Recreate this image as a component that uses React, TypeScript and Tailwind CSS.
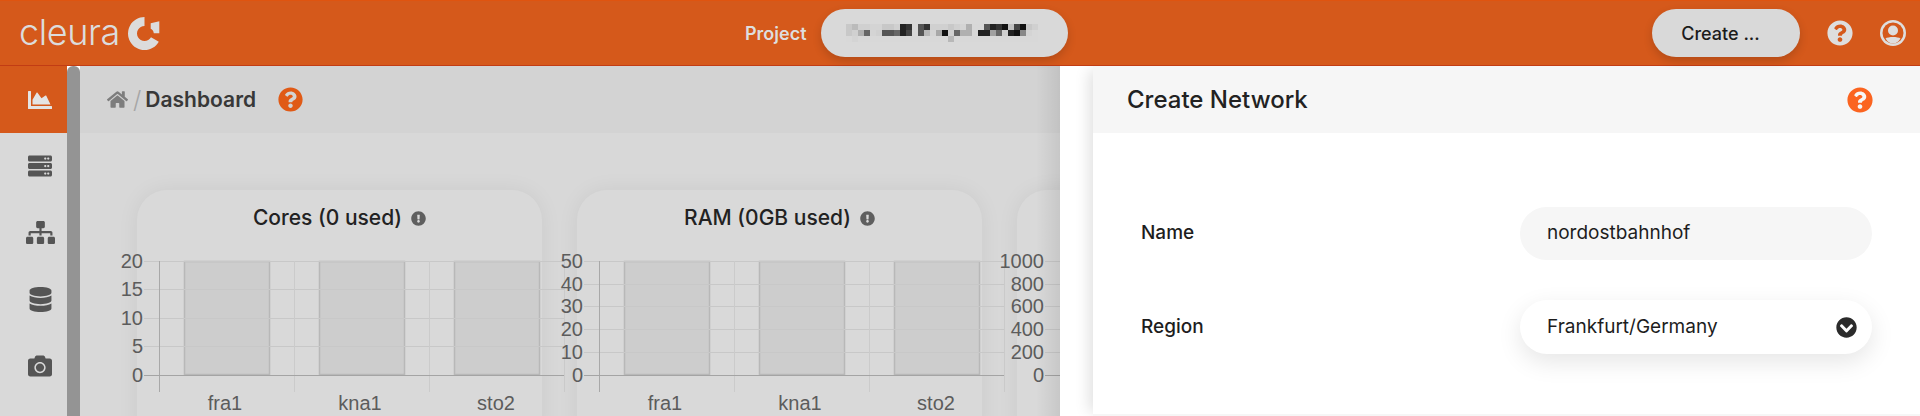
import { FaCamera, FaChartArea, FaChevronCircleDown, FaDatabase, FaExclamationCircle, FaHome, FaQuestionCircle, FaServer, FaSitemap } from "react-icons/fa";

type ChartProps = {
  axisX?: number;
  right: number;
  tickEnd: number;
  ticks: { label: string; y: number }[];
  bars?: number[];
  barWidth?: number;
  grid?: number[];
  labels?: { label: string; x: number }[];
};

// coordinates are relative to the card's left edge, numbers and ticks hang out to the left
const Chart = ({ axisX, right, tickEnd, ticks, bars = [], barWidth = 0, grid = [], labels = [] }: ChartProps) => (
  <svg width={405} height={205} className="block overflow-visible font-['Liberation_Sans',sans-serif]">
    {bars.map((x) => (
      <rect key={x} x={x + 0.5} y={16.5} width={barWidth} height={113} fill="#cdcdcd" stroke="#b8b8b8" strokeWidth={1.5} />
    ))}
    {ticks.map((t) => (
      <line key={t.label} x1={right + 1} x2={tickEnd} y1={t.y + 0.5} y2={t.y + 0.5} stroke="#c8c8c8" />
    ))}
    {grid.map((x) => (
      <line key={x} x1={x + 0.5} x2={x + 0.5} y1={16} y2={147} stroke="#cbcbcb" />
    ))}
    {axisX !== undefined && <line x1={axisX + 0.5} x2={axisX + 0.5} y1={16} y2={147} stroke="#a8a8a8" />}
    <line x1={right + 1} x2={tickEnd} y1={130.5} y2={130.5} stroke="#a4a4a4" />
    {ticks.map((t) => (
      <text key={t.label} x={right} y={t.y + 7} textAnchor="end" fontSize={20} fill="#5c5c5c">
        {t.label}
      </text>
    ))}
    {labels.map((l) => (
      <text key={l.label} x={l.x} y={165} textAnchor="middle" fontSize={20} fill="#5c5c5c">
        {l.label}
      </text>
    ))}
  </svg>
);

const ChartCard = ({ title, chart }: { title?: string; chart: ChartProps }) => (
  <div className="shrink-0 w-[405px] h-[260px] rounded-[30px] bg-[#d9d9d9] shadow-[0_0_22px_rgba(0,0,0,0.06)]">
    <div className="h-[55px] flex items-center justify-center gap-[9px] text-[21px] font-medium text-[#222222]">
      {title}
      {title && <FaExclamationCircle size={15} className="text-[#5f5f5f] mt-[2px]" />}
    </div>
    <Chart {...chart} />
  </div>
);

const MOSAIC = [
  "c8 bb d0 d0 d4 d4 c8 c8 d0 22 33 d8 55 33 d0 d0 d0 c8 d0 d4 b0 d8 d8 55 22 33 11 c0 44 11 c8 d0",
  "c8 d0 b0 66 d4 d0 55 55 66 22 44 d8 55 b8 d4 a8 11 d0 66 b0 b0 d8 22 22 a0 66 d0 22 11 88 d4 d8",
  "d8 d4 d8 d8 d8 d8 d8 d8 d8 d8 d8 d8 d8 d8 d8 d8 d8 b8 d8 d8 d8 d8 d8 d8 d8 d8 d8 d8 d8 d8 d8 d8",
].map((row) => row.split(" "));

const Pill = "rounded-full bg-[#d9d9d9] shadow-[0_4px_10px_rgba(0,0,0,0.16)] flex items-center";

const TICKS_SIX = (labels: string[]) => [16, 39, 61, 84, 107, 130].map((y, i) => ({ label: labels[i], y }));

const App = () => {
  const xLabels = [
    { label: "fra1", x: 88 },
    { label: "kna1", x: 223 },
    { label: "sto2", x: 359 },
  ];
  const coresChart: ChartProps = {
    axisX: 22,
    right: 6,
    tickEnd: 427,
    ticks: [
      { label: "20", y: 16 },
      { label: "15", y: 44 },
      { label: "10", y: 73 },
      { label: "5", y: 101 },
      { label: "0", y: 130 },
    ],
    bars: [47, 182, 317],
    barWidth: 85,
    grid: [157, 292, 427],
    labels: xLabels,
  };
  const ramChart: ChartProps = {
    axisX: 22,
    right: 6,
    tickEnd: 427,
    ticks: TICKS_SIX(["50", "40", "30", "20", "10", "0"]),
    bars: [47, 182, 317],
    barWidth: 85,
    grid: [157, 292, 427],
    labels: xLabels,
  };
  const thirdChart: ChartProps = {
    right: 27,
    tickEnd: 60,
    ticks: TICKS_SIX(["1000", "800", "600", "400", "200", "0"]),
  };

  return (
    <div className="w-[1920px] h-[416px] overflow-hidden flex flex-col bg-white font-['Inter',sans-serif]">
      <header className="relative z-20 h-[66px] shrink-0 flex items-center bg-[#d5591b] border-t border-t-[#df5410] border-b border-b-[#c23c14]">
        <div className="flex items-center w-[200px] pl-[19px]">
          <span className="w-[97px] text-[36px] font-light leading-none text-[#dcdcdc] tracking-[-0.4px] pb-[2px]">cleura</span>
          <svg width="32" height="33" viewBox="0 0 32 33" className="ml-[12px]">
            <path d="M16.5 0 A16.5 16.5 0 1 0 30.8 24.75 L23 20.25 A7.5 7.5 0 1 1 16.5 9 Z" fill="#dcdcdc" />
            <path d="M22.7 6.2 L31.3 4.2 L31.3 16.2 L25.8 16.2 C25.6 14 24.5 12.6 22.7 11.8 Z" fill="#dcdcdc" />
          </svg>
        </div>
        <div className="ml-[545px] text-[18px] font-semibold text-[#dedede]">Project</div>
        <div className={`ml-[14px] w-[247px] h-[48px] pl-[25px] ${Pill}`}>
          <svg width="192" height="18" viewBox="0 0 192 18">
            {MOSAIC.map((row, y) =>
              row.map((c, x) => <rect key={`${x}-${y}`} x={x * 6} y={y * 6} width={6} height={6} fill={`#${c}${c}${c}`} />),
            )}
          </svg>
        </div>
        <div className={`ml-[584px] w-[148px] h-[48px] pr-[10px] justify-center text-[18px] font-medium text-[#1b1b1b] ${Pill}`}>
          Create ...
        </div>
        <FaQuestionCircle size={26} className="ml-[27px] text-[#dedede]" />
        <svg width="26" height="26" viewBox="0 0 26 26" className="ml-[27px]">
          <circle cx="13" cy="13" r="13" fill="#dedede" />
          <circle cx="13" cy="13" r="10.5" fill="#d5591b" />
          <circle cx="13" cy="10.5" r="5" fill="#dedede" />
          <path d="M5.5 18.5 C8 16.5 18 16.5 20.5 18.5 C19 21.5 16 23.5 13 23.5 C10 23.5 7 21.5 5.5 18.5 Z" fill="#dedede" />
        </svg>
      </header>

      <div className="flex flex-1 min-h-0">
        <nav className="w-[67px] shrink-0 bg-[#d9d9d9] flex flex-col text-[#555555]">
          <div className="h-[67px] pl-[13px] bg-[#d5591b] flex items-center justify-center text-[#e4e4e4]">
            <FaChartArea size={24} />
          </div>
          <div className="h-[66px] pl-[13px] flex items-center justify-center"><FaServer size={24} /></div>
          <div className="h-[67px] pl-[13px] flex items-center justify-center"><FaSitemap size={29} /></div>
          <div className="h-[66px] pl-[13px] flex items-center justify-center"><FaDatabase size={25} /></div>
          <div className="h-[67px] pl-[13px] flex items-center justify-center"><FaCamera size={24} /></div>
        </nav>
        <div className="w-[13px] shrink-0 bg-[#949494] rounded-t-[6px]" />

        <main className="flex-1 min-w-0 relative overflow-hidden bg-[#d8d8d8]">
          <div className="h-[67px] bg-[#d3d3d3] flex items-center pl-[27px] text-[21px]">
            <FaHome size={21} className="text-[#7d7d7d]" />
            <span className="ml-[5px] mr-[4px] text-[24px] text-[#a6a6a6] font-light">/</span>
            <span className="font-semibold text-[#383838]">Dashboard</span>
            <FaQuestionCircle size={25} className="ml-[22px] text-[#e05a16]" />
          </div>
          <div className="flex gap-[35px] pl-[57px] pt-[57px]">
            <ChartCard title="Cores (0 used)" chart={coresChart} />
            <ChartCard title="RAM (0GB used)" chart={ramChart} />
            <ChartCard chart={thirdChart} />
          </div>
          <div className="absolute right-0 inset-y-0 w-[24px] bg-gradient-to-r from-transparent to-black/[0.08]" />
        </main>

        <aside className="w-[860px] shrink-0 flex bg-white">
          <div className="w-[33px] shrink-0" />
          <div className="flex-1 flex flex-col shadow-[-8px_0_14px_-4px_rgba(0,0,0,0.12)]">
            <div className="h-[67px] shrink-0 bg-[#f6f6f6] flex items-center justify-between pl-[34px] pr-[47px]">
              <span className="text-[24px] font-medium text-[#222222]">Create Network</span>
              <FaQuestionCircle size={26} className="text-[#fb6420]" />
            </div>
            <div className="flex-1 flex flex-col pt-[74px] text-[19px] text-[#1d1d1d]">
              <div className="flex items-center h-[53px] pl-[48px]">
                <span className="w-[379px] font-medium">Name</span>
                <div className="w-[352px] h-[53px] rounded-full bg-[#f6f6f6] flex items-center pl-[27px]">nordostbahnhof</div>
              </div>
              <div className="flex items-center h-[54px] pl-[48px] mt-[40px]">
                <span className="w-[379px] font-medium">Region</span>
                <div className="w-[352px] h-[54px] rounded-full bg-white shadow-[0_8px_24px_rgba(0,0,0,0.1)] flex items-center justify-between pl-[27px] pr-[15px]">
                  Frankfurt/Germany
                  <FaChevronCircleDown size={21} className="text-[#2b2b2b]" />
                </div>
              </div>
            </div>
            <div className="h-[2px] shrink-0 bg-[#f6f6f6]" />
          </div>
        </aside>
      </div>
    </div>
  );
};

export default App;
